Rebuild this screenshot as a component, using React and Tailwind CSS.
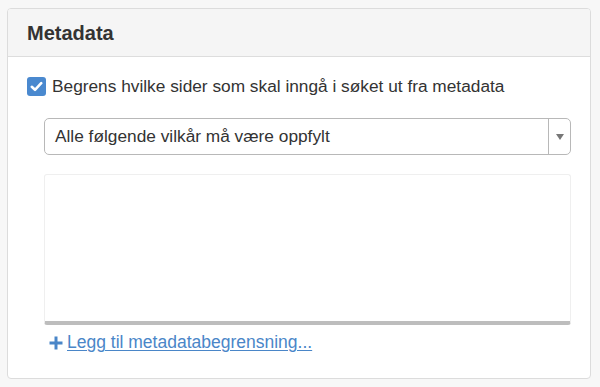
export default function App() {
  return (
    <div className="w-[600px] h-[387px] bg-[#f7f7f7] pt-[8px] pl-[7px] font-['Liberation_Sans',Arial,sans-serif] text-[#333]">
      <div className="w-[584px] h-[371px] bg-white border border-[#dcdcdc] rounded-[4px] overflow-hidden flex flex-col">
        <div className="h-[48px] bg-[#f5f5f5] border-b border-[#dddddd] flex items-center pl-[19px]">
          <span className="text-[20px] font-bold text-[#333] leading-none">Metadata</span>
        </div>
        <div className="pl-[19px] pr-[19px] pt-[20px] flex flex-col">
          <div className="flex items-center h-[19px]">
            <div className="w-[19px] h-[19px] rounded-[3px] bg-[#4a89cf] flex items-center justify-center">
              <svg width="13" height="11" viewBox="0 0 13 11">
                <path d="M1.8 5.8 L5 8.8 L11.2 2.2" fill="none" stroke="white" strokeWidth="2.6" strokeLinecap="round" strokeLinejoin="round" />
              </svg>
            </div>
            <span className="ml-[6px] text-[17.3px] leading-none text-[#333]">Begrens hvilke sider som skal inngå i søket ut fra metadata</span>
          </div>
          <div className="ml-[17px] mt-[22px] h-[37px] border border-[#b8b8b8] rounded-[5px] flex items-stretch bg-white">
            <div className="flex-1 flex items-center pl-[10px] text-[17.3px] text-[#333]">Alle følgende vilkår må være oppfylt</div>
            <div className="w-[22px] border-l border-[#b8b8b8] flex items-center justify-center">
              <svg width="8" height="6" viewBox="0 0 8 6"><path d="M0 0 L8 0 L4 6 Z" fill="#777" /></svg>
            </div>
          </div>
          <div className="ml-[17px] mt-[19px] h-[151px] border border-[#efefef] border-b-[4px] border-b-[#bdbdbd] rounded-[3px] bg-white"></div>
          <div className="ml-[22px] mt-[8px]">
            <a href="#" className="inline-flex items-center text-[17.5px] text-[#4a86c8] underline underline-offset-[2px] leading-none">
              <svg width="14" height="14" viewBox="0 0 14 14" className="mr-[4px]">
                <path d="M7 0.5 V13.5 M0.5 7 H13.5" stroke="#4a86c8" strokeWidth="3" />
              </svg>
              <span>Legg til metadatabegrensning...</span>
            </a>
          </div>
        </div>
      </div>
    </div>
  );
}
